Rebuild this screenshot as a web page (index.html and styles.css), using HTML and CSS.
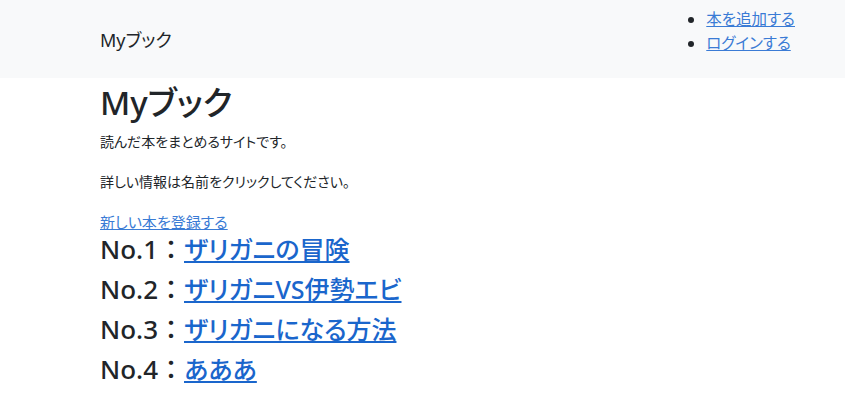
FILE: index.html
```html
<!DOCTYPE html>
<html lang="ja">
<head>
    <meta charset="UTF-8" />
    <meta name="viewport" content="width=device-width, initial-scale=1.0" />
    <title>Myブック</title>
    <link rel="stylesheet" href="styles.css">
</head>
<body>
    <nav class="navbar">
        <a class="brand" href="#">Myブック</a>
        <ul class="nav-links">
            <li><a href="#">本を追加する</a></li>
            <li><a href="#">ログインする</a></li>
        </ul>
    </nav>

    <div class="container">
        <h1>Myブック</h1>
        <p>読んだ本をまとめるサイトです。</p>
        <p>詳しい情報は名前をクリックしてください。</p>
        <a class="new-book" href="#">新しい本を登録する</a>

        <h3 class="book">No.1：<a href="#">ザリガニの冒険</a></h3>
        <h3 class="book">No.2：<a href="#">ザリガニVS伊勢エビ</a></h3>
        <h3 class="book">No.3：<a href="#">ザリガニになる方法</a></h3>
        <h3 class="book">No.4：<a href="#">あああ</a></h3>
    </div>
</body>
</html>
```

FILE: styles.css
```css
body {
    margin: 0;
    padding: 0;
    font-family: "Noto Sans", "Noto Sans CJK JP", sans-serif;
    font-feature-settings: "palt";
    font-size: 14px;
    line-height: 24px;
    color: #212529;
    background: #fff;
}

a {
    color: #0d6efd;
    text-decoration: underline;
}

.navbar {
    display: flex;
    align-items: flex-start;
    height: 78px;
    padding: 0 50px 0 100px;
    background-color: #f8f9fa;
}

.brand {
    margin-top: 25px;
    font-size: 18px;
    line-height: 30px;
    color: #212529;
    text-decoration: none;
}

.nav-links {
    margin: 7px 0 0 auto;
    padding-left: 17px;
    font-size: 15.5px;
    line-height: 24px;
}

.nav-links a {
    color: #3a7bd5;
}

.container {
    padding: 0 100px;
}

h1 {
    margin: 4px 0 6px;
    font-size: 33px;
    line-height: 42px;
    font-weight: 500;
}

p {
    margin: 0 0 16px;
}

.new-book {
    display: block;
    font-size: 15px;
    color: #3a7bd5;
    line-height: 24px;
}

.book {
    margin: 0 0 9px;
    font-size: 26px;
    line-height: 31px;
    font-weight: 500;
    font-feature-settings: normal;
}

.book a {
    font-size: 25px;
    font-feature-settings: "palt";
    color: #1a66cc;
}
```
